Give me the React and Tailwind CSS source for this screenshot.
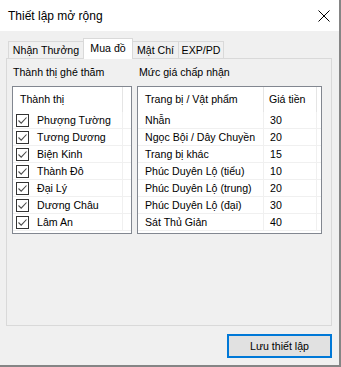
import React from "react";

const cities = ["Phượng Tường", "Tương Dương", "Biện Kinh", "Thành Đô", "Đại Lý", "Dương Châu", "Lâm An"];
const prices = [
  ["Nhẫn", "30"],
  ["Ngọc Bội / Dây Chuyền", "20"],
  ["Trang bị khác", "15"],
  ["Phúc Duyên Lộ (tiểu)", "10"],
  ["Phúc Duyên Lộ (trung)", "20"],
  ["Phúc Duyên Lộ (đại)", "30"],
  ["Sát Thủ Giản", "40"],
];

function Check() {
  return (
    <span className="w-[13px] h-[13px] border border-[#333333] bg-white flex items-center justify-center shrink-0">
      <svg width="11" height="11" viewBox="0 0 11 11">
        <path d="M1.5 5.5 L4.2 8.2 L9.5 2.5" fill="none" stroke="#4a4a4a" strokeWidth="1.1" />
      </svg>
    </span>
  );
}

export default function App() {
  return (
    <div
      className="w-[341px] h-[367px] bg-[#f0f0f0] border-r-2 border-b-2 border-[#858585] text-[10.6px] text-black overflow-hidden flex flex-col whitespace-nowrap"
      style={{ fontFamily: '"Liberation Sans", Arial, sans-serif' }}
    >
      {/* Title bar */}
      <div className="h-[31px] bg-white flex items-center justify-between pl-[8px] pr-[9px] shrink-0">
        <span className="leading-none text-[12px]">Thiết lập mở rộng</span>
        <svg width="12" height="12" viewBox="0 0 12 12">
          <path d="M0.5 0.5 L11.5 11.5 M11.5 0.5 L0.5 11.5" stroke="#000" strokeWidth="1" />
        </svg>
      </div>

      {/* Tabs */}
      <div className="mt-[7px] h-[20px] flex items-end pl-[8px] shrink-0 relative z-10">
        <div className="w-[75px] h-[17px] border-l border-t border-[#d9d9d9] bg-[#f0f0f0] flex items-center justify-center leading-none">
          Nhận Thưởng
        </div>
        <div className="w-[50px] h-[21px] -mb-px border-l border-t border-r border-[#d9d9d9] bg-white flex items-start pt-[4px] justify-center leading-none">
          Mua đồ
        </div>
        <div className="w-[46px] h-[17px] border-t border-r border-[#d9d9d9] bg-[#f0f0f0] flex items-center justify-center leading-none">
          Mật Chí
        </div>
        <div className="w-[45px] h-[17px] border-t border-r border-[#d9d9d9] bg-[#f0f0f0] flex items-center justify-center leading-none">
          EXP/PD
        </div>
      </div>

      {/* Panel */}
      <div className="ml-[6px] w-[326px] h-[268px] border border-[#d9d9d9] bg-[#f0f0f0] shrink-0 pt-[5px] pl-[5px] flex gap-[5px]">
        {/* Left column */}
        <div className="w-[120px] flex flex-col">
          <div className="h-[17px] leading-[17px] pl-[1px]">Thành thị ghé thăm</div>
          <div className="mt-[5px] h-[148px] border border-[#828790] bg-white flex flex-col overflow-hidden">
            <div className="h-[25px] flex shrink-0">
              <div className="w-[109px] flex items-center pl-[7px]">Thành thị</div>
              <div className="w-px bg-[#e5e5e5]" />
            </div>
            {cities.map((c) => (
              <div key={c} className="h-[17px] flex border-b border-[#f0f0f0] shrink-0">
                <div className="w-[109px] flex items-center pl-[3px] gap-[8px]">
                  <Check />
                  <span className="leading-none">{c}</span>
                </div>
                <div className="w-px bg-[#f0f0f0]" />
              </div>
            ))}
          </div>
        </div>

        {/* Right column */}
        <div className="w-[185px] flex flex-col">
          <div className="h-[17px] leading-[17px] pl-[2px]">Mức giá chấp nhận</div>
          <div className="mt-[5px] h-[148px] border border-[#828790] bg-white flex flex-col overflow-hidden">
            <div className="h-[25px] flex shrink-0">
              <div className="w-[125px] flex items-center pl-[7px]">Trang bị / Vật phẩm</div>
              <div className="w-px bg-[#e5e5e5]" />
              <div className="w-[52px] flex items-center pl-[5px]">Giá tiền</div>
              <div className="w-px bg-[#e5e5e5]" />
            </div>
            {prices.map(([n, p]) => (
              <div key={n} className="h-[17px] flex border-b border-[#f0f0f0] shrink-0">
                <div className="w-[125px] flex items-center pl-[7px] leading-none overflow-hidden">{n}</div>
                <div className="w-px bg-[#f0f0f0]" />
                <div className="w-[52px] flex items-center pl-[6px] leading-none">{p}</div>
                <div className="w-px bg-[#f0f0f0]" />
              </div>
            ))}
          </div>
        </div>
      </div>

      {/* Button */}
      <div className="mt-[8px] ml-[227px] w-[105px] h-[24px] border-2 border-[#0078d7] bg-[#e1e1e1] flex items-center justify-center leading-none shrink-0">
        Lưu thiết lập
      </div>
    </div>
  );
}
